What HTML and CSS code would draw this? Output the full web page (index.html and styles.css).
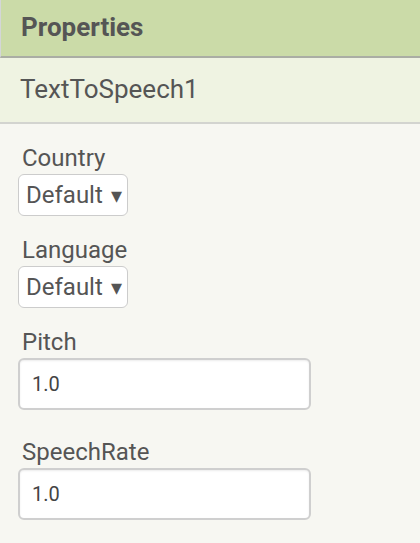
FILE: index.html
```html
<!DOCTYPE html>
<html>
<head>
<meta charset="utf-8">
<link rel="stylesheet" href="styles.css">
</head>
<body>
<div class="panel">
  <div class="panel-header">Properties</div>
  <div class="component-name">TextToSpeech1</div>
  <div class="props">
    <div class="prop">
      <div class="prop-label">Country</div>
      <div class="choice">Default <span class="caret">▾</span></div>
    </div>
    <div class="prop">
      <div class="prop-label">Language</div>
      <div class="choice">Default <span class="caret">▾</span></div>
    </div>
    <div class="prop prop-text">
      <div class="prop-label">Pitch</div>
      <div class="textbox">1.0</div>
    </div>
    <div class="prop prop-text">
      <div class="prop-label">SpeechRate</div>
      <div class="textbox">1.0</div>
    </div>
  </div>
</div>
</body>
</html>
```
FILE: styles.css
```css
html, body {
  margin: 0;
  padding: 0;
  background: #f7f7f2;
  font-family: Roboto, "Liberation Sans", sans-serif;
  color: #555;
}
.panel {
  width: 420px;
  height: 543px;
  overflow: hidden;
}
.panel-header {
  box-sizing: border-box;
  background: #cbdba8;
  border-left: 1px solid #d4d6d8;
  border-bottom: 2px solid #aaada4;
  height: 58px;
  padding-left: 20px;
  font-size: 26px;
  font-weight: 700;
  line-height: 54px;
  color: #555;
}
.component-name {
  height: 66px;
  box-sizing: border-box;
  background: #eff3e2;
  border-bottom: 2px solid #d3d4d0;
  padding-left: 20px;
  font-size: 26px;
  line-height: 62px;
  color: #555;
}
.props {
  display: flex;
  flex-direction: column;
  gap: 20px;
  padding: 20px 0 0 18px;
}
.prop {
  display: flex;
  flex-direction: column;
  align-items: flex-start;
  gap: 2px;
}
.prop-text {
  padding-bottom: 8px;
}
.prop-label {
  font-size: 24px;
  line-height: 28px;
  padding-left: 4px;
  color: #555;
}
.choice {
  box-sizing: border-box;
  width: 110px;
  height: 42px;
  background: #fff;
  border: 1px solid #ccc;
  border-radius: 6px;
  padding-left: 7px;
  font-size: 24px;
  line-height: 40px;
  color: #555;
  white-space: nowrap;
}
.caret {
  font-size: 22px;
  margin-left: 2px;
}
.textbox {
  box-sizing: border-box;
  width: 293px;
  height: 52px;
  background: #fff;
  border: 2px solid #cfcfcf;
  border-radius: 6px;
  box-shadow: inset 0 1px 2px rgba(0,0,0,0.08);
  padding-left: 12px;
  font-size: 20px;
  line-height: 48px;
  color: #444;
}
```
